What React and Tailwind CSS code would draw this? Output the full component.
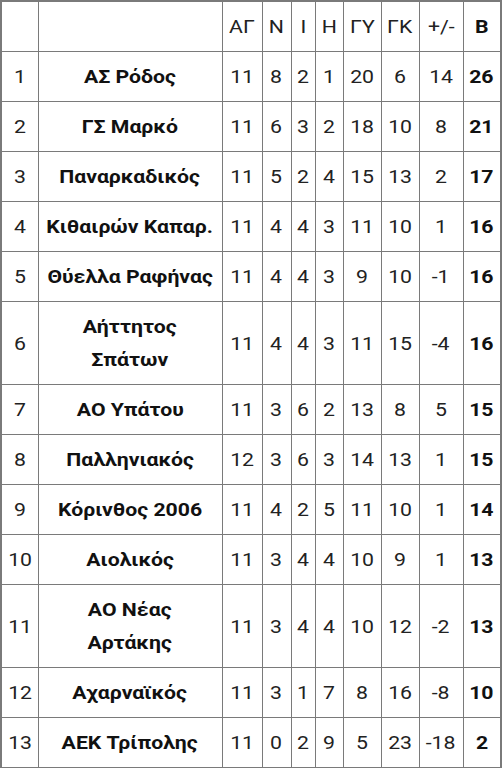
import React from "react";

const rows = [
  ["1", "ΑΣ Ρόδος", "11", "8", "2", "1", "20", "6", "14", "26"],
  ["2", "ΓΣ Μαρκό", "11", "6", "3", "2", "18", "10", "8", "21"],
  ["3", "Παναρκαδικός", "11", "5", "2", "4", "15", "13", "2", "17"],
  ["4", "Κιθαιρών Καπαρ.", "11", "4", "4", "3", "11", "10", "1", "16"],
  ["5", "Θύελλα Ραφήνας", "11", "4", "4", "3", "9", "10", "-1", "16"],
  ["6", ["Αήττητος", "Σπάτων"], "11", "4", "4", "3", "11", "15", "-4", "16"],
  ["7", "ΑΟ Υπάτου", "11", "3", "6", "2", "13", "8", "5", "15"],
  ["8", "Παλληνιακός", "12", "3", "6", "3", "14", "13", "1", "15"],
  ["9", "Κόρινθος 2006", "11", "4", "2", "5", "11", "10", "1", "14"],
  ["10", "Αιολικός", "11", "3", "4", "4", "10", "9", "1", "13"],
  ["11", ["ΑΟ Νέας", "Αρτάκης"], "11", "3", "4", "4", "10", "12", "-2", "13"],
  ["12", "Αχαρναϊκός", "11", "3", "1", "7", "8", "16", "-8", "10"],
  ["13", "ΑΕΚ Τρίπολης", "11", "0", "2", "9", "5", "23", "-18", "2"],
];

const widths = [37, 184, 40, 29, 24, 28, 38, 38, 44, 38];
const heads = ["", "", "ΑΓ", "Ν", "Ι", "Η", "ΓΥ", "ΓΚ", "+/-", "Β"];

const cell = "border border-[#7a7a7a] py-[8px] px-0 leading-[33px] text-center";

export default function App() {
  return (
    <div className="w-[503px] h-[768px] bg-white overflow-hidden" style={{ fontFamily: "Roboto, 'Noto Sans', sans-serif" }}>
      <table className="table-fixed border-collapse border-2 border-[#7a7a7a] w-[502px] text-[18px] text-[#222]">
        <colgroup>
          {widths.map((w, i) => (
            <col key={i} style={{ width: w }} />
          ))}
        </colgroup>
        <thead>
          <tr>
            {heads.map((h, i) => (
              <th key={i} className={`${cell} ${i === 9 ? "font-bold text-[#111]" : "font-normal"}`}>
                <span className="inline-block scale-x-[1.18] whitespace-nowrap">{h}</span>
              </th>
            ))}
          </tr>
        </thead>
        <tbody>
          {rows.map((r) => (
            <tr key={r[0]}>
              {r.map((v, i) => (
                <td
                  key={i}
                  className={`${cell} ${i === 1 || i === 9 ? "font-bold text-[#111]" : "font-normal"}`}
                >
                  <span className="inline-block scale-x-[1.18] whitespace-nowrap">
                    {Array.isArray(v) ? (
                      <>
                        {v[0]}
                        <br />
                        {v[1]}
                      </>
                    ) : (
                      v
                    )}
                  </span>
                </td>
              ))}
            </tr>
          ))}
        </tbody>
      </table>
    </div>
  );
}
